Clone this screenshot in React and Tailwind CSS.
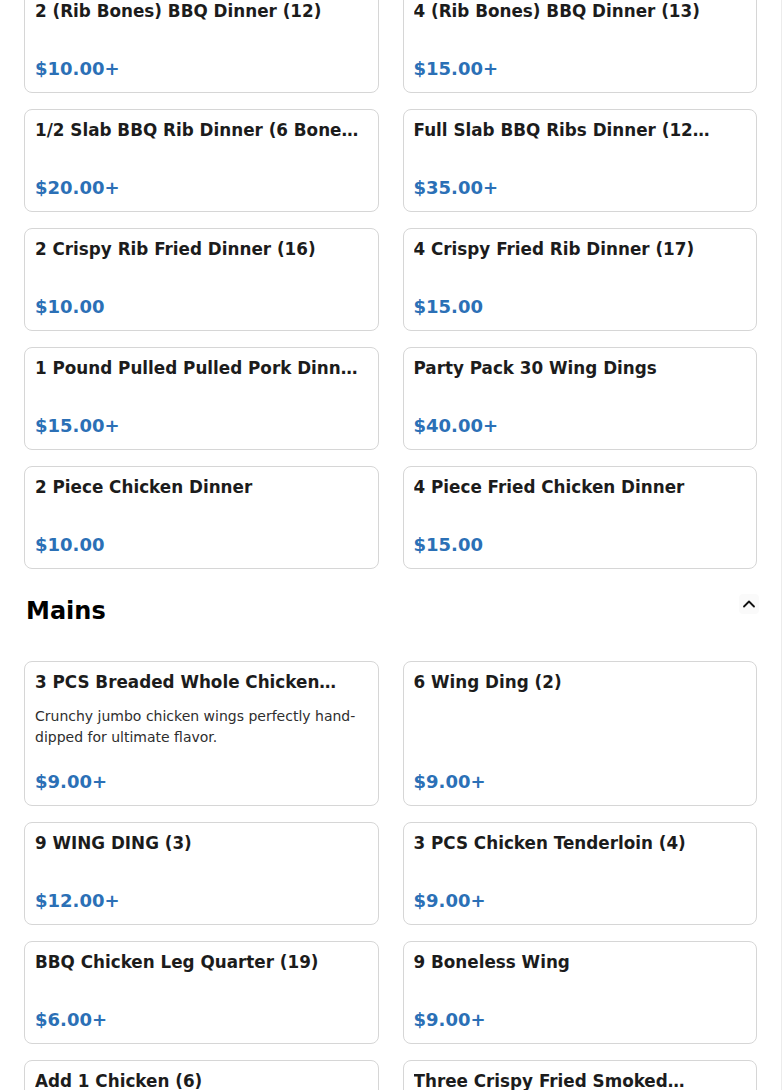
import React, { useState } from 'react';
import { ChevronUp } from 'lucide-react';

// wrap: clamp to one line at word breaks instead of cutting mid-word
const topItems = [
  { name: '2 (Rib Bones) BBQ Dinner (12)', price: '$10.00+' },
  { name: '4 (Rib Bones) BBQ Dinner (13)', price: '$15.00+' },
  { name: '1/2 Slab BBQ Rib Dinner (6 Bones) (14)', price: '$20.00+' },
  { name: 'Full Slab BBQ Ribs Dinner (12 Bones) (15)', price: '$35.00+', wrap: true },
  { name: '2 Crispy Rib Fried Dinner (16)', price: '$10.00' },
  { name: '4 Crispy Fried Rib Dinner (17)', price: '$15.00' },
  { name: '1 Pound Pulled Pulled Pork Dinner (18)', price: '$15.00+' },
  { name: 'Party Pack 30 Wing Dings', price: '$40.00+' },
  { name: '2 Piece Chicken Dinner', price: '$10.00' },
  { name: '4 Piece Fried Chicken Dinner', price: '$15.00' }
];

const mains = [
  {
    name: '3 PCS Breaded Whole Chicken Wings (1)',
    description: 'Crunchy jumbo chicken wings perfectly hand-dipped for ultimate flavor.',
    price: '$9.00+',
    wrap: true
  },
  { name: '6 Wing Ding (2)', price: '$9.00+' },
  { name: '9 WING DING (3)', price: '$12.00+' },
  { name: '3 PCS Chicken Tenderloin (4)', price: '$9.00+' },
  { name: 'BBQ Chicken Leg Quarter (19)', price: '$6.00+' },
  { name: '9 Boneless Wing', price: '$9.00+' },
  { name: 'Add 1 Chicken (6)', price: '$3.00+' },
  { name: 'Three Crispy Fried Smoked Chicken Wings', price: '$9.00+', wrap: true }
];

const ItemCard = ({ item }) => (
  <div className="flex flex-col rounded-lg border border-[#d6d6d6] bg-white px-[10px] pt-2 pb-[11px]">
    <h3
      className={
        item.wrap
          ? 'line-clamp-1 text-[16.8px] leading-6 font-bold text-[#1c1c1c]'
          : 'truncate text-[16.8px] leading-6 font-bold text-[#1c1c1c]'
      }
    >
      {item.name}
    </h3>
    {item.description ? (
      <p className="mt-3 text-sm leading-[21px] text-[#2e2e2e]">{item.description}</p>
    ) : (
      <div className="mt-3" />
    )}
    <div className="mt-auto pt-[22px] text-[18px] leading-6 font-bold text-[#2b70b6]">{item.price}</div>
  </div>
);

export default function App() {
  const [open, setOpen] = useState(true);

  return (
    <div
      className="h-[1090px] w-full overflow-hidden border-r border-[#ececec] bg-white px-6"
      style={{ fontFamily: '"DejaVu Sans", Verdana, sans-serif' }}
    >
      <div className="-mt-[10px] grid grid-cols-2 gap-x-6 gap-y-4">
        {topItems.map((item) => (
          <ItemCard key={item.name} item={item} />
        ))}
      </div>

      <section>
        <div className="mt-[26px] flex items-start justify-between">
          <h2 className="pl-[2px] text-2xl leading-8 font-bold text-black">Mains</h2>
          <button
            onClick={() => setOpen(!open)}
            className="-mr-[2px] mt-[-1px] flex h-5 w-5 items-center justify-center rounded bg-[#fafafa] text-[#111]"
          >
            <ChevronUp size={20} strokeWidth={2.2} />
          </button>
        </div>

        {open && (
          <div className="mt-[34px] grid grid-cols-2 gap-x-6 gap-y-4">
            {mains.map((item) => (
              <ItemCard key={item.name} item={item} />
            ))}
          </div>
        )}
      </section>
    </div>
  );
}
